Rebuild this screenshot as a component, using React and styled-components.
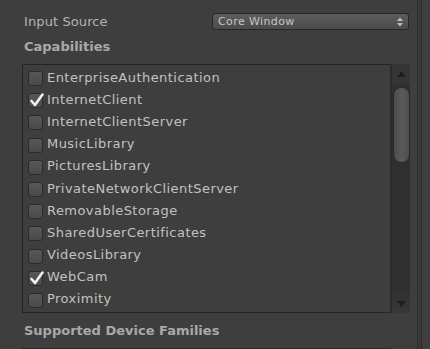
import React from "react";
import styled, { createGlobalStyle } from "styled-components";

const Global = createGlobalStyle`
  html, body { margin: 0; padding: 0; background: #3e3e3e; }
  body { font-family: "DejaVu Sans", Verdana, sans-serif; }
`;

const Page = styled.div`
  width: 430px;
  height: 349px;
  overflow: hidden;
  display: flex;
  background: #3e3e3e;
`;

const Main = styled.div`
  width: 392px;
  padding-left: 22px;
  display: flex;
  flex-direction: column;
`;

const Gutter = styled.div`
  flex: 1;
  display: flex;
  padding-left: 3px;
`;

const Stripe = styled.div`
  width: 3px;
  border-left: 1px solid #2c2c2c;
  border-right: 1px solid #2c2c2c;
  background: #393939;
`;

const FieldRow = styled.div`
  margin-top: 13px;
  height: 17px;
  display: flex;
  align-items: center;
  flex: none;
`;

const Label = styled.div`
  width: 188px;
  padding-left: 2px;
  font-size: 13px;
  color: #b4b4b4;
  letter-spacing: 0.1px;
`;

const Dropdown = styled.div`
  box-sizing: border-box;
  width: 197px;
  height: 17px;
  border: 1px solid #262626;
  border-radius: 3px;
  background: linear-gradient(#5c5c5c, #4c4c4c);
  display: flex;
  align-items: center;
  justify-content: space-between;
  padding: 0 5px 0 5px;
  font-size: 11px;
  color: #c6c6c6;
  letter-spacing: 0.4px;
`;

const Header = styled.div`
  padding-left: 2px;
  font-size: 13px;
  font-weight: bold;
  color: #a9a9a9;
  height: 16px;
  line-height: 16px;
  flex: none;
  margin-top: ${(p) => p.$mt}px;
`;

const ListWrap = styled.div`
  margin-top: 9px;
  display: flex;
  height: 249px;
  flex: none;
`;

const ListBox = styled.div`
  box-sizing: border-box;
  width: 369px;
  border: 1px solid #252525;
  border-right-color: #2a2a2a;
  padding: 1px 0 0 5px;
  display: flex;
  flex-direction: column;
  overflow: hidden;
`;

const Row = styled.div`
  height: 22.2px;
  flex: none;
  display: flex;
  align-items: center;
  gap: 4px;
  font-size: 13px;
  color: #c2c2c2;
  letter-spacing: 0.45px;
  white-space: nowrap;
`;

const Box = styled.div`
  box-sizing: border-box;
  width: 15px;
  height: 15px;
  border: 1px solid #2b2b2b;
  border-radius: 3px;
  background: linear-gradient(#575757, #4a4a4a);
  position: relative;
  flex: none;
  margin-top: 3px;
`;

const Tick = styled.svg`
  position: absolute;
  left: 0px;
  top: -2px;
`;

const Scroll = styled.div`
  width: 19px;
  background: #303030;
  display: flex;
  flex-direction: column;
  align-items: center;
  border-left: 1px solid #2e2e2e;
  box-sizing: border-box;
`;

const ArrowBtn = styled.div`
  height: ${(p) => p.$h}px;
  width: 100%;
  display: flex;
  align-items: ${(p) => (p.$down ? "flex-end" : "center")};
  justify-content: center;
  padding-bottom: ${(p) => (p.$down ? 6 : 0)}px;
  box-sizing: border-box;
  background: ${(p) => (p.$down ? "linear-gradient(#2e2e2e, #383838)" : "#353535")};
`;

const Thumb = styled.div`
  margin-top: 3px;
  width: 17px;
  height: 76px;
  box-sizing: border-box;
  border-radius: 8px;
  border: 1px solid #2a2a2a;
  background: linear-gradient(90deg, #4c4c4c, #5a5a5a 50%, #4e4e4e);
`;

const Track = styled.div`
  flex: 1;
  width: 100%;
`;

const NextBox = styled.div`
  margin-top: 9px;
  height: 10px;
  border-top: 1px solid #2a2a2a;
  width: 369px;
  flex: none;
`;

const items = [
  ["EnterpriseAuthentication", false],
  ["InternetClient", true],
  ["InternetClientServer", false],
  ["MusicLibrary", false],
  ["PicturesLibrary", false],
  ["PrivateNetworkClientServer", false],
  ["RemovableStorage", false],
  ["SharedUserCertificates", false],
  ["VideosLibrary", false],
  ["WebCam", true],
  ["Proximity", false],
];

function Check({ on }) {
  return (
    <Box>
      {on && (
        <Tick width="16" height="16" viewBox="0 0 16 16">
          <path d="M2.5 9 L6 13 L13.5 2.5" fill="none" stroke="#f2f2f2" strokeWidth="2.6" strokeLinecap="round" strokeLinejoin="round" />
        </Tick>
      )}
    </Box>
  );
}

export default function App() {
  return (
    <>
      <Global />
      <Page>
        <Main>
          <FieldRow>
            <Label>Input Source</Label>
            <Dropdown>
              <span>Core Window</span>
              <svg width="6" height="10" viewBox="0 0 6 10">
                <path d="M0 4 L3 0.5 L6 4 Z M0 6 L3 9.5 L6 6 Z" fill="#bdbdbd" />
              </svg>
            </Dropdown>
          </FieldRow>
          <Header $mt={9}>Capabilities</Header>
          <ListWrap>
            <ListBox>
              {items.map(([n, on]) => (
                <Row key={n}>
                  <Check on={on} />
                  <span>{n}</span>
                </Row>
              ))}
            </ListBox>
            <Scroll>
              <ArrowBtn $h={20}>
                <svg width="9" height="6" viewBox="0 0 9 6">
                  <path d="M0 6 L4.5 0 L9 6 Z" fill="#1e1e1e" />
                </svg>
              </ArrowBtn>
              <Thumb />
              <Track />
              <ArrowBtn $h={28} $down>
                <svg width="9" height="6" viewBox="0 0 9 6">
                  <path d="M0 0 L9 0 L4.5 6 Z" fill="#1e1e1e" />
                </svg>
              </ArrowBtn>
            </Scroll>
          </ListWrap>
          <Header $mt={10}>Supported Device Families</Header>
          <NextBox />
        </Main>
        <Gutter>
          <Stripe />
        </Gutter>
      </Page>
    </>
  );
}
